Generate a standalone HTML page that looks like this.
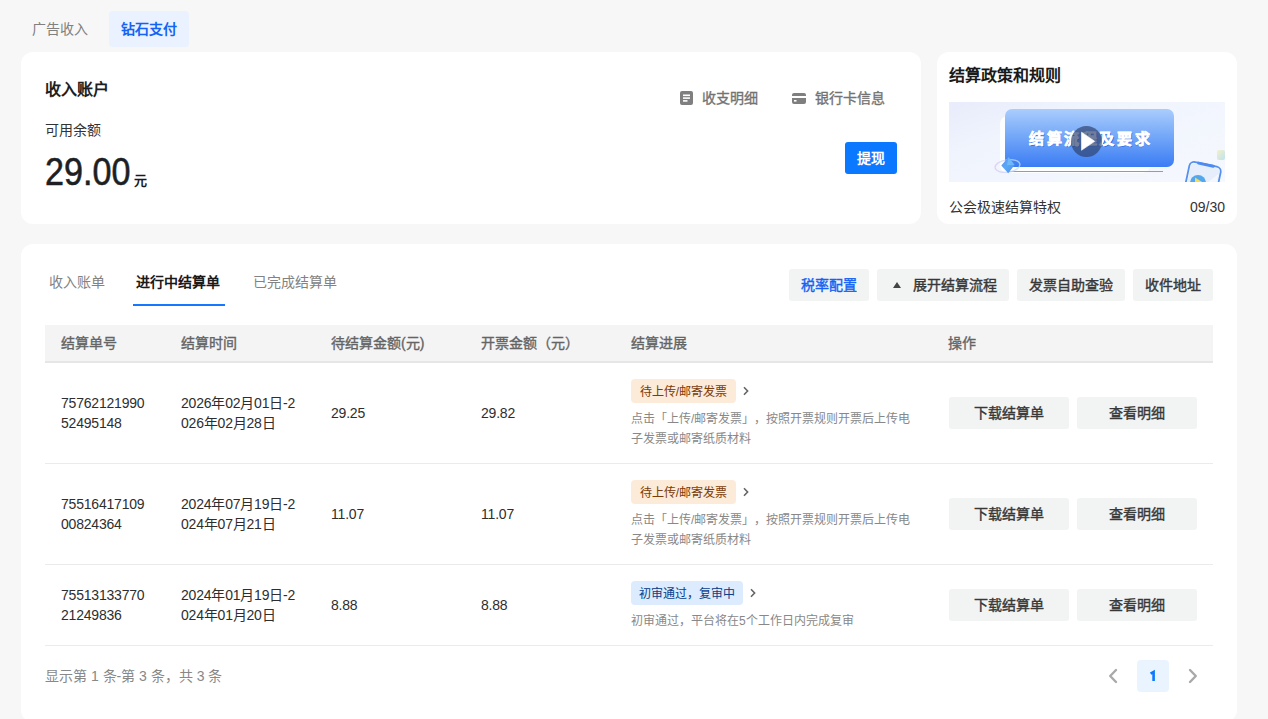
<!DOCTYPE html>
<html lang="zh-CN"><head><meta charset="utf-8">
<style>
*{box-sizing:border-box;margin:0;padding:0}
html,body{text-spacing-trim:space-all;width:1268px;height:719px;overflow:hidden;background:#f7f7f7;font-family:"Liberation Sans",sans-serif;color:#1f1f1f}
.abs{position:absolute}
.tab{position:absolute;top:11px;height:36px;line-height:36px;font-size:14px;padding:0 12px;border-radius:4px}
.card{position:absolute;background:#fff;border-radius:12px}
.lnk{position:absolute;top:90px;height:16px;line-height:16px;font-size:14px;color:#737373;-webkit-text-stroke:0.35px #737373}
.btn{position:absolute;height:32px;line-height:32px;font-size:14px;border-radius:3px;background:#f2f3f3;color:#383838;-webkit-text-stroke:0.4px currentColor;text-align:center}
.th{position:absolute;top:325px;height:36px;line-height:36px;font-size:14px;color:#646464;-webkit-text-stroke:0.35px #646464}
.td{position:absolute;font-size:14px;line-height:20px;color:#2e2e2e;letter-spacing:-0.2px}
.tag{position:absolute;height:24px;line-height:26px;font-size:12px;padding:0 8px;border-radius:4px;-webkit-text-stroke:0.05px currentColor}
.desc{position:absolute;font-size:12px;line-height:20px;color:#888;width:290px}
.hr{position:absolute;left:45px;width:1168px;height:1px;background:#ebebeb}
.chev{position:absolute}
</style></head><body>
<!-- top tabs -->
<div class="tab" style="left:20px;color:#808080">广告收入</div>
<div class="tab" style="left:109px;width:80px;background:#eaf2ff;color:#1463f3;font-weight:bold;text-align:center;padding:0">钻石支付</div>

<!-- card 1 -->
<div class="card" style="left:21px;top:52px;width:900px;height:172px"></div>
<div class="abs" style="left:45px;top:80px;font-size:16px;line-height:20px;font-weight:bold;color:#1f1f1f">收入账户</div>
<div class="abs" style="left:45px;top:120px;font-size:14px;line-height:20px;color:#333">可用余额</div>
<div class="abs" style="left:45px;top:150px;font-size:39px;line-height:44px;color:#1d1f24;-webkit-text-stroke:0.6px #1d1f24;transform:scaleX(.875);transform-origin:0 0">29.00</div>
<div class="abs" style="left:134px;top:172px;font-size:13px;line-height:18px;font-weight:bold;color:#1a1a1a">元</div>

<svg class="abs" style="left:680px;top:91px" width="14" height="14" viewBox="0 0 14 14"><rect x="0" y="0" width="13" height="14" rx="2" fill="#7f7f7f"/><rect x="3" y="3.5" width="7" height="1.6" fill="#fff"/><rect x="3" y="6.3" width="7" height="1.6" fill="#fff"/><rect x="3" y="9.1" width="4.5" height="1.6" fill="#fff"/></svg>
<div class="lnk" style="left:702px">收支明细</div>
<svg class="abs" style="left:792px;top:93px" width="14" height="11" viewBox="0 0 14 11"><rect x="0" y="0" width="14" height="11" rx="2" fill="#7f7f7f"/><rect x="0" y="3" width="14" height="2" fill="#fff"/><rect x="2" y="7" width="2.5" height="1.6" fill="#fff"/></svg>
<div class="lnk" style="left:815px">银行卡信息</div>
<div class="btn" style="left:845px;top:142px;width:52px;background:#0a78ff;color:#fff;font-weight:bold;-webkit-text-stroke:0">提现</div>

<!-- card 2 -->
<div class="card" style="left:937px;top:52px;width:300px;height:172px"></div>
<div class="abs" style="left:949px;top:66px;font-size:16px;line-height:20px;font-weight:bold;color:#1a1a1a">结算政策和规则</div>
<div class="abs" style="left:949px;top:102px;width:276px;height:80px;overflow:hidden;background:linear-gradient(160deg,#e8ecfb 0%,#f0f4fd 30%,#f5f8fe 100%)">
  <div class="abs" style="left:51px;top:14px;width:150px;height:57px;border-radius:8px;background:#fdfeff"></div>
  <div class="abs" style="left:60px;top:69px;width:154px;height:1px;background:#62a6f7"></div>
  <div class="abs" style="left:56px;top:7px;width:169px;height:58px;border-radius:7px;background:linear-gradient(180deg,#aacdfd 0%,#76a9f8 45%,#3a7cf4 100%)"></div>
  <div class="abs" style="left:80px;top:27px;font-size:15px;line-height:20px;font-weight:bold;color:#fff;letter-spacing:2.6px;white-space:nowrap;-webkit-text-stroke:0.5px #fff;text-shadow:0.8px 0.8px 0 #2f6fe6">结算流程及要求</div>
  <div class="abs" style="left:122.3px;top:24px;width:31px;height:31px;border-radius:50%;background:rgba(45,65,108,.68)"></div>
  <svg class="abs" style="left:122.3px;top:24px" width="31" height="31" viewBox="0 0 31 31"><path d="M10.5 6.2 L23.7 15.3 L10.5 24.3 Z" fill="#fff" stroke="#fff" stroke-width="0.6" stroke-linejoin="round"/></svg>
  <svg class="abs" style="left:44px;top:53px" width="34" height="22" viewBox="0 0 34 22"><defs><linearGradient id="dg" x1="0" y1="0" x2="1" y2="1"><stop offset="0" stop-color="#6a8ff0"/><stop offset=".5" stop-color="#56a9f6"/><stop offset="1" stop-color="#5a86ee"/></linearGradient><linearGradient id="rg" x1="0" y1="0" x2="1" y2="0"><stop offset="0" stop-color="#d9c6f6"/><stop offset="1" stop-color="#b9e3fb"/></linearGradient></defs><ellipse cx="14.5" cy="11" rx="12.5" ry="6.2" transform="rotate(-8 14.5 11)" fill="none" stroke="url(#rg)" stroke-width="1.4" opacity=".75"/><path d="M15.5 2 L21.6 10 L15.2 18.2 L8.3 10.4 Z" fill="url(#dg)"/><path d="M15.5 2 L21.6 10 L14 10 Z" fill="#7fc6fa" opacity=".6"/></svg>
  <svg class="abs" style="left:229px;top:56px" width="47" height="26" viewBox="0 0 47 26"><g transform="rotate(12 20 20)"><rect x="9" y="5" width="32" height="34" rx="5" fill="none" stroke="#5590ef" stroke-width="1.8"/><rect x="10.5" y="6.5" width="29" height="31" rx="4" fill="#e6eefb"/><path d="M18 37 L39 12 L39 30 Z" fill="#f7faff" opacity=".8"/><rect x="16" y="3.8" width="18" height="3" rx="1.5" fill="#4d8bf0"/></g><circle cx="20" cy="25" r="8" fill="#52a8ee"/><path d="M17 19.5 L25 24.5 L17 29Z" fill="#f3dc5a"/></svg>
  <div class="abs" style="left:268px;top:48px;width:8px;height:10px;border-radius:2px;background:linear-gradient(135deg,#f3f0c8,#bfe3f0)"></div>
</div>
<div class="abs" style="left:949px;top:197px;font-size:14px;line-height:20px;color:#333">公会极速结算特权</div>
<div class="abs" style="left:1125px;top:197px;width:100px;text-align:right;font-size:14px;line-height:20px;color:#333">09/30</div>

<!-- main card -->
<div class="card" style="left:21px;top:244px;width:1216px;height:478px"></div>
<div class="abs" style="left:49px;top:272px;font-size:14px;line-height:20px;color:#828282">收入账单</div>
<div class="abs" style="left:136px;top:272px;font-size:14px;line-height:20px;color:#1a1a1a;font-weight:bold">进行中结算单</div>
<div class="abs" style="left:133px;top:304px;width:92px;height:2px;background:#1677ff"></div>
<div class="abs" style="left:253px;top:272px;font-size:14px;line-height:20px;color:#828282">已完成结算单</div>

<div class="btn" style="left:789px;top:269px;width:80px;color:#1463f3">税率配置</div>
<div class="btn" style="left:877px;top:269px;width:132px;text-align:left;padding-left:36px">展开结算流程</div>
<svg class="abs" style="left:893px;top:282px" width="8" height="6" viewBox="0 0 8 6"><path d="M4 0 L8 6 L0 6 Z" fill="#444"/></svg>
<div class="btn" style="left:1017px;top:269px;width:108px">发票自助查验</div>
<div class="btn" style="left:1133px;top:269px;width:80px">收件地址</div>

<!-- table header -->
<div class="abs" style="left:45px;top:325px;width:1168px;height:36px;background:#f4f4f4"></div>
<div class="abs" style="left:45px;top:361px;width:1168px;height:2px;background:#e6e6e6"></div>
<div class="th" style="left:61px">结算单号</div>
<div class="th" style="left:181px">结算时间</div>
<div class="th" style="left:331px">待结算金额(元)</div>
<div class="th" style="left:481px">开票金额（元）</div>
<div class="th" style="left:631px">结算进展</div>
<div class="th" style="left:948px">操作</div>

<!-- row 1 -->
<div class="td" style="left:61px;top:393px">75762121990<br>52495148</div>
<div class="td" style="left:181px;top:393px">2026年02月01日-2<br>026年02月28日</div>
<div class="td" style="left:331px;top:403px">29.25</div>
<div class="td" style="left:481px;top:403px">29.82</div>
<div class="tag" style="left:631px;top:379px;width:105px;text-align:center;padding:0;background:#fdebd9;color:#7a3d0a">待上传/邮寄发票</div>
<svg class="chev" style="left:741px;top:385px" width="10" height="12" viewBox="0 0 10 12"><path d="M3 2.3 L6.6 6 L3 9.7" fill="none" stroke="#656565" stroke-width="1.6"/></svg>
<div class="desc" style="left:631px;top:408.5px">点击「上传/邮寄发票」，按照开票规则开票后上传电<br>子发票或邮寄纸质材料</div>
<div class="btn" style="left:949px;top:397px;width:120px">下载结算单</div>
<div class="btn" style="left:1077px;top:397px;width:120px">查看明细</div>
<div class="hr" style="top:463px"></div>

<!-- row 2 -->
<div class="td" style="left:61px;top:494px">75516417109<br>00824364</div>
<div class="td" style="left:181px;top:494px">2024年07月19日-2<br>024年07月21日</div>
<div class="td" style="left:331px;top:504px">11.07</div>
<div class="td" style="left:481px;top:504px">11.07</div>
<div class="tag" style="left:631px;top:480px;width:105px;text-align:center;padding:0;background:#fdebd9;color:#7a3d0a">待上传/邮寄发票</div>
<svg class="chev" style="left:741px;top:486px" width="10" height="12" viewBox="0 0 10 12"><path d="M3 2.3 L6.6 6 L3 9.7" fill="none" stroke="#656565" stroke-width="1.6"/></svg>
<div class="desc" style="left:631px;top:509.5px">点击「上传/邮寄发票」，按照开票规则开票后上传电<br>子发票或邮寄纸质材料</div>
<div class="btn" style="left:949px;top:498px;width:120px">下载结算单</div>
<div class="btn" style="left:1077px;top:498px;width:120px">查看明细</div>
<div class="hr" style="top:564px"></div>

<!-- row 3 -->
<div class="td" style="left:61px;top:585px">75513133770<br>21249836</div>
<div class="td" style="left:181px;top:585px">2024年01月19日-2<br>024年01月20日</div>
<div class="td" style="left:331px;top:595px">8.88</div>
<div class="td" style="left:481px;top:595px">8.88</div>
<div class="tag" style="left:631px;top:581px;width:112px;text-align:center;padding:0;background:#dcebfd;color:#0d3f8a">初审通过，复审中</div>
<svg class="chev" style="left:748px;top:587px" width="10" height="12" viewBox="0 0 10 12"><path d="M3 2.3 L6.6 6 L3 9.7" fill="none" stroke="#656565" stroke-width="1.6"/></svg>
<div class="desc" style="left:631px;top:610.5px">初审通过，平台将在5个工作日内完成复审</div>
<div class="btn" style="left:949px;top:589px;width:120px">下载结算单</div>
<div class="btn" style="left:1077px;top:589px;width:120px">查看明细</div>
<div class="hr" style="top:645px"></div>

<!-- footer -->
<div class="abs" style="left:45px;top:666px;font-size:14px;line-height:20px;color:#888">显示第 1 条-第 3 条，共 3 条</div>
<svg class="abs" style="left:1105px;top:666px" width="16" height="20" viewBox="0 0 16 20"><path d="M11 4 L5.2 10 L11 16" fill="none" stroke="#a9a9a9" stroke-width="2.4" stroke-linecap="round" stroke-linejoin="round"/></svg>
<div class="abs" style="left:1137px;top:660px;width:32px;height:32px;border-radius:4px;background:#eaf4ff"></div><svg class="abs" style="left:1137px;top:660px" width="32" height="32" viewBox="0 0 32 32"><path d="M13.6 13.6 L16.6 12 L16.6 21" fill="none" stroke="#0a78ff" stroke-width="2.6" stroke-linejoin="miter"/></svg>
<svg class="abs" style="left:1185px;top:666px" width="16" height="20" viewBox="0 0 16 20"><path d="M5 4 L10.8 10 L5 16" fill="none" stroke="#a9a9a9" stroke-width="2.4" stroke-linecap="round" stroke-linejoin="round"/></svg>
</body></html>
